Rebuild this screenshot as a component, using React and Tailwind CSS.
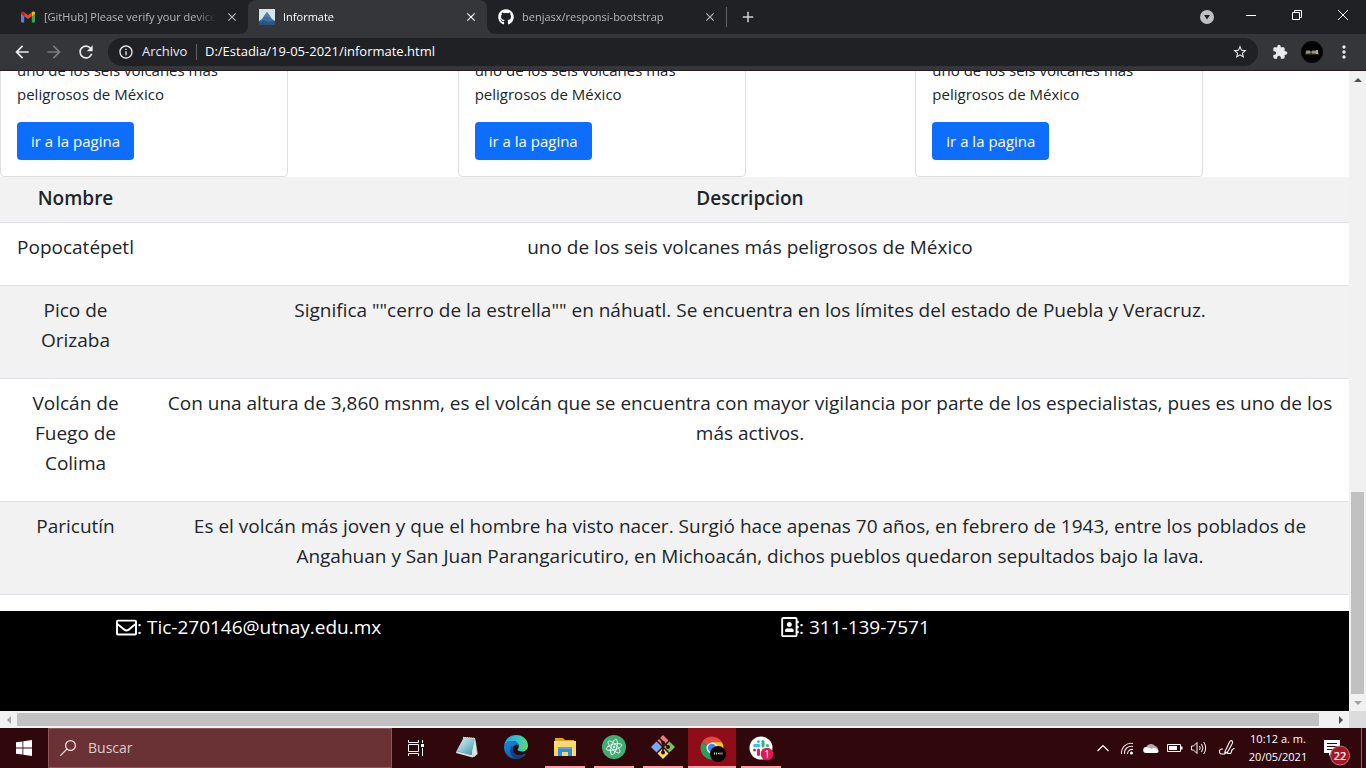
import React from "react";
import { MdArrowBack, MdArrowForward, MdRefresh, MdInfoOutline, MdStarBorder, MdExtension, MdMoreVert, MdClose, MdAdd } from "react-icons/md";
import { FaGithub, FaRegEnvelope, FaRegAddressBook } from "react-icons/fa";

const rows = [
  ["Popocatépetl", "uno de los seis volcanes más peligrosos de México"],
  ["Pico de Orizaba", 'Significa ""cerro de la estrella"" en náhuatl. Se encuentra en los límites del estado de Puebla y Veracruz.'],
  ["Volcán de Fuego de Colima", "Con una altura de 3,860 msnm, es el volcán que se encuentra con mayor vigilancia por parte de los especialistas, pues es uno de los más activos."],
  ["Paricutín", "Es el volcán más joven y que el hombre ha visto nacer. Surgió hace apenas 70 años, en febrero de 1943, entre los poblados de Angahuan y San Juan Parangaricutiro, en Michoacán, dichos pueblos quedaron sepultados bajo la lava."],
];

function GmailIcon() {
  return (
    <svg viewBox="0 0 16 16" className="size-4">
      <path d="M1 4.2v8.2c0 .6.4 1 1 1h2.2V6.6z" fill="#4285f4" />
      <path d="M15 4.2v8.2c0 .6-.4 1-1 1h-2.2V6.6z" fill="#34a853" />
      <path d="M11.8 3.4v3.8L15 4.8V4c0-1.4-1.5-2-2.5-1.2z" fill="#fbbc04" />
      <path d="M4.2 3.4v3.8L1 4.8V4c0-1.4 1.5-2 2.5-1.2z" fill="#c5221f" />
      <path d="M4.2 7.2V3.3L8 6.2l3.8-2.9v3.9L8 10z" fill="#ea4335" />
    </svg>
  );
}

function MountainIcon() {
  return (
    <svg viewBox="0 0 16 16" className="size-4">
      <rect width="16" height="16" fill="#d6e4ec" />
      <path d="M0 16v-4l3-2 2-3 3-4 3 4 2 3 3 2v4z" fill="#3f6f9f" />
      <path d="M8 3l3 4-1 1-2-1-2 1-1-1z" fill="#5c82a3" />
      <path d="M0 16v-3l5-2 4 2 7-1v4z" fill="#285684" />
    </svg>
  );
}

function Tab({ icon, title, active }) {
  return (
    <div className="flex h-full w-[239px] items-center gap-2 pr-2 pl-[11px]">
      <button type="button" className={"flex min-w-0 flex-1 items-center gap-2 text-left text-[11px] leading-4 " + (active ? "text-white" : "text-[#b4b7bb]")}>
        <span className="shrink-0">{icon}</span>
        <span className="flex-1 overflow-hidden whitespace-nowrap [mask-image:linear-gradient(to_right,black_88%,transparent)]">{title}</span>
      </button>
      <button type="button" aria-label={"Cerrar " + title} className={"flex size-4 items-center justify-center " + (active ? "text-white" : "text-[#b4b7bb]")}>
        <MdClose className="size-[14px]" />
      </button>
    </div>
  );
}

function BrowserBar() {
  return (
    <header className="shrink-0 border-b border-[#241c20] bg-[#35363a]">
      <div className="flex h-[34px]">
        <div className="rounded-br-lg bg-[#202124] pl-[9px]">
          <Tab icon={<GmailIcon />} title="[GitHub] Please verify your device" />
        </div>
        <div className="bg-[linear-gradient(#202124_50%,#35363a_50%)]">
          <div className="h-full rounded-t-lg bg-[#35363a]">
            <Tab icon={<MountainIcon />} title="Informate" active />
          </div>
        </div>
        <div className="flex flex-1 items-center rounded-bl-lg bg-[#202124]">
          <Tab icon={<FaGithub className="size-4 text-white" />} title="benjasx/responsi-bootstrap" />
          <span className="h-5 w-px bg-[#5f6165]" />
          <button type="button" aria-label="Nueva pestaña" className="flex h-8 w-[42px] items-center justify-center text-[#cfd1d4]">
            <MdAdd className="size-[18px]" />
          </button>
          <div className="ml-auto flex h-full text-white">
            <button type="button" aria-label="Buscar pestañas" className="flex w-[42px] items-center justify-center">
              <svg viewBox="0 0 14 14" className="size-[14px]">
                <circle cx="7" cy="7" r="7" fill="#bdc1c6" />
                <path d="M4 5h6L7 9.5z" fill="#202124" />
              </svg>
            </button>
            <button type="button" aria-label="Minimizar" className="flex h-[29px] w-[46px] items-center justify-center">
              <svg viewBox="0 0 10 10" className="size-[10px]"><path d="M0 5h10v1H0z" fill="currentColor" /></svg>
            </button>
            <button type="button" aria-label="Restaurar" className="flex h-[29px] w-[46px] items-center justify-center">
              <svg viewBox="0 0 10 10" className="size-[10px]" fill="none" stroke="currentColor"><path d="M.5 2.5h7v7h-7zM2.5 2.5v-2h7v7h-2" /></svg>
            </button>
            <button type="button" aria-label="Cerrar" className="flex h-[29px] w-[46px] items-center justify-center">
              <svg viewBox="0 0 10 10" className="size-[10px]" fill="none" stroke="currentColor"><path d="M0 0l10 10M10 0L0 10" /></svg>
            </button>
          </div>
        </div>
      </div>
      <div className="flex h-9 items-center px-[6px] text-[#e8eaed]">
        <button type="button" aria-label="Atrás" className="flex w-8 justify-center"><MdArrowBack className="size-5" /></button>
        <button type="button" aria-label="Adelante" className="flex w-8 justify-center text-[#7b7c7f]"><MdArrowForward className="size-5" /></button>
        <button type="button" aria-label="Recargar" className="flex w-8 justify-center"><MdRefresh className="size-5" /></button>
        <div className="mx-[6px] flex h-7 flex-1 items-center rounded-full bg-[#202124] pr-[10px] pl-[10px] text-[13px]">
          <MdInfoOutline className="size-4" />
          <label htmlFor="url" className="ml-2 w-[46px] whitespace-nowrap">Archivo</label>
          <span className="mx-2 h-4 w-px bg-[#5f6165]" />
          <input id="url" type="text" defaultValue="D:/Estadia/19-05-2021/informate.html" className="min-w-0 flex-1 bg-transparent text-white outline-none" />
          <button type="button" aria-label="Agregar a favoritos"><MdStarBorder className="size-4" /></button>
        </div>
        <button type="button" aria-label="Extensiones" className="flex w-8 justify-center"><MdExtension className="size-4" /></button>
        <button type="button" aria-label="Perfil" className="flex w-8 justify-center">
          <svg viewBox="0 0 22 22" className="size-[22px]">
            <circle cx="11" cy="11" r="11" fill="#050404" />
            <path d="M4 12.500h14" stroke="#4c3b22" strokeWidth="2" />
            <path d="M6 9.500v3M8 9.500v3M9.500 11h1M12 9.500v3M14 9.500v3M15 10h2M15 12h2" stroke="#d8d4cc" strokeWidth="1.300" />
          </svg>
        </button>
        <button type="button" aria-label="Menú" className="flex w-8 justify-center"><MdMoreVert className="size-5" /></button>
      </div>
    </header>
  );
}

function Card() {
  return (
    <article className="w-72 rounded border border-[#dfdfdf] bg-white p-4">
      <p className="mb-4 text-[15px] leading-6">uno de los seis volcanes más peligrosos de México</p>
      <a href="#pagina" className="inline-block rounded bg-[#0d6efd] px-[14px] py-[7px] align-top text-[15px] leading-6 text-white">ir a la pagina</a>
    </article>
  );
}

function Page() {
  return (
    <main className="flex min-w-0 flex-1 flex-col justify-end overflow-hidden bg-white text-[#212529]">
      <div className="-mr-6 grid shrink-0 grid-cols-3">
        <Card />
        <Card />
        <Card />
      </div>
      <table className="mb-4 w-full shrink-0 border-separate border-spacing-0 text-center text-[19px] leading-[30px]">
        <thead>
          <tr className="bg-[#f2f2f2]">
            <th className="w-[151px] border-b border-[#dee2e6] px-2 pt-[6px] pb-[9px] font-semibold">Nombre</th>
            <th className="border-b border-[#dee2e6] px-2 pt-[6px] pb-[9px] font-semibold">Descripcion</th>
          </tr>
        </thead>
        <tbody>
          {rows.map(([name, text]) => (
            <tr key={name} className="align-top even:bg-[#f2f2f2]">
              <td className="border-b border-[#dee2e6] px-2 pt-[9px] pb-[23px]">{name}</td>
              <td className="border-b border-[#dee2e6] px-2 pt-[9px] pb-[23px]">{text}</td>
            </tr>
          ))}
        </tbody>
      </table>
      <footer className="grid h-[100px] shrink-0 grid-cols-[665fr_568fr] bg-black pl-[116px] text-[19px] leading-8 text-white">
        <p className="flex h-8 items-center"><FaRegEnvelope className="size-[21px]" />: Tic-270146@utnay.edu.mx</p>
        <p className="flex h-8 items-center"><FaRegAddressBook className="h-5 w-[18px]" />: 311-139-7571</p>
      </footer>
    </main>
  );
}

function Arrow({ d, label, dim }) {
  return (
    <button type="button" aria-label={label} className={"flex size-[17px] shrink-0 items-center justify-center " + (dim ? "text-[#a3a3a3]" : "text-[#505050]")}>
      <svg viewBox="0 0 8 8" className="size-2"><path d={d} fill="currentColor" /></svg>
    </button>
  );
}

function VerticalScroll() {
  return (
    <div className="flex w-[17px] shrink-0 flex-col items-center bg-[#f1f1f1]">
      <Arrow label="Subir" d="M0 6l4-4 4 4z" />
      <div className="flex flex-1 flex-col justify-end"><div className="h-1/3 w-[13px] bg-[#c1c1c1]" /></div>
      <Arrow label="Bajar" d="M0 2l4 4 4-4z" dim />
    </div>
  );
}

function HorizontalScroll() {
  return (
    <div className="flex h-[17px] shrink-0 items-center bg-[#f1f1f1]">
      <Arrow label="Izquierda" d="M6 0L2 4l4 4z" dim />
      <div className="flex-1"><div className="h-[13px] w-[99%] bg-[#c1c1c1]" /></div>
      <Arrow label="Derecha" d="M2 0l4 4-4 4z" />
      <span className="size-[17px] bg-[#dcdcdc]" />
    </div>
  );
}

const NotepadIcon = (
  <svg viewBox="0 0 24 24" className="size-6">
    <defs><linearGradient id="pad" x1="0" y1="0" x2="1" y2="1"><stop offset="0" stopColor="#e2f3f6" /><stop offset=".5" stopColor="#8cc8d6" /><stop offset="1" stopColor="#3591a8" /></linearGradient></defs>
    <path d="M20.500 4L23 19l-4 3-1-2z" fill="#9c8560" />
    <path d="M8 2l12 1 2 16-3 3z" fill="#dfeaec" />
    <path d="M8.500 3L1.500 16l15 4L20 4z" fill="url(#pad)" />
    <path d="M1.500 16l-.5 2 16.500 4.500 2-1.500L20 4l-3.500 16z" fill="#d6e0e2" />
    <path d="M8 2.500l12 1" stroke="#b9c4c6" strokeWidth="1.500" strokeDasharray="1 1" />
  </svg>
);
const EdgeIcon = (
  <svg viewBox="0 0 24 24" className="size-6">
    <defs>
      <linearGradient id="edgeTop" x1="0" y1=".4" x2="1" y2=".4"><stop offset="0" stopColor="#2a9fe2" /><stop offset=".55" stopColor="#2fc3d3" /><stop offset="1" stopColor="#62dd5b" /></linearGradient>
      <linearGradient id="edgeLow" x1="0" y1="0" x2="1" y2="1"><stop offset="0" stopColor="#168ce0" /><stop offset="1" stopColor="#114a8b" /></linearGradient>
    </defs>
    <path d="M0 11C1 4 6 0 12 0c7 0 12 5 12 10.500 0 4-3 6-6 6-3 0-4.500-1.200-4.500-2 0-.7 1.300-1.300 1.300-3.300C14.800 8 11.500 6 8.500 6 4 6 1 8.500 0 11z" fill="url(#edgeTop)" />
    <path d="M0 12C.5 8 4 6 8.500 6c3.500 0 6.300 2.300 6.300 5-1-1-2.600-1.700-4.300-.6C8.600 11.600 8 14 9.500 17c1.600 3 5.500 4.500 9.500 2.600 1-.4 3-1.300 3-.5C20 22 16 24 12 24 5 24-.3 18 0 12z" fill="url(#edgeLow)" />
    <path d="M8 11c-3 3-2.500 10 4 13 4 0 8-2 10-5-5 3-10 2-12.500-2C8.300 15 8 13 8.700 11.700z" fill="#0d3f82" />
  </svg>
);
const FolderIcon = (
  <svg viewBox="0 0 24 24" className="size-6">
    <path d="M2 3h8l2 2h9v4H2z" fill="#e0a11c" />
    <path d="M1 6h22v15H1z" fill="#ffd766" />
    <path d="M1 6h22v2H1z" fill="#ffe08a" />
    <path d="M5 12h14v9h-4v-4H9v4H5z" fill="#368bd6" />
    <path d="M5 12h14v2H5z" fill="#55a5e6" />
  </svg>
);
const AtomIcon = (
  <svg viewBox="0 0 24 24" className="size-6" fill="none">
    <circle cx="12" cy="12" r="12" fill="#42ad72" />
    <g stroke="#f2fff8" strokeWidth=".9">
      <ellipse cx="12" cy="12" rx="8" ry="2.800" transform="rotate(-15 12 12)" />
      <ellipse cx="12" cy="12" rx="8" ry="2.800" transform="rotate(45 12 12)" />
      <ellipse cx="12" cy="12" rx="8" ry="2.800" transform="rotate(105 12 12)" />
    </g>
    <circle cx="12" cy="12" r="1.200" fill="#fff" />
  </svg>
);
const GitIcon = (
  <svg viewBox="0 0 24 24" className="size-6">
    <path d="M12 0l5.500 5.500L12 11 6.500 5.500z" fill="#ee7b77" />
    <path d="M5.500 6.500L11 12l-5.500 5.500L0 12z" fill="#79a8f7" />
    <path d="M18.500 6.500L24 12l-5.500 5.500L13 12z" fill="#7cc264" />
    <path d="M12 13l5.500 5.500L12 24l-5.500-5.500z" fill="#f7dd70" />
    <path d="M8 3l4 4v10M12 7l5 5" stroke="#2b1010" strokeWidth="1.700" fill="none" />
    <g fill="#2b1010"><circle cx="12" cy="7.500" r="1.800" /><circle cx="12" cy="17.500" r="2" /><circle cx="17" cy="12" r="2" /></g>
  </svg>
);
const ChromeIcon = (
  <svg viewBox="-1 -2 26 26" className="size-[26px] overflow-visible">
    <path d="M12 12L2.050 6.250A11.500 11.500 0 0 1 21.950 6.250z" fill="#e04a3f" />
    <path d="M12 12V6.250h9.950A11.500 11.500 0 0 1 12 23.500z" fill="#f9c52c" />
    <path d="M12 12l5 3-5 8.500A11.500 11.500 0 0 1 2.050 6.250z" fill="#2d9d55" />
    <circle cx="12" cy="12" r="5.500" fill="#fff" /><circle cx="12" cy="12" r="4.200" fill="#4285f4" />
    <circle cx="18" cy="18" r="8" fill="#080606" />
    <path d="M14.500 16.500v2M16.500 16.500v2M18 17.500h1M20 16.500v2M22 16.500v2" stroke="#d6d2ca" />
  </svg>
);
const SlackIcon = (
  <svg viewBox="-1 -2 26 26" className="size-[26px] overflow-visible">
    <circle cx="12" cy="12" r="11.500" fill="#fff" />
    <g strokeWidth="3" strokeLinecap="round">
      <path d="M9.500 5.500v0M5.500 9.500h4.500" stroke="#36c5f0" />
      <path d="M14 5.500v4.500M18.500 9.500v0" stroke="#2eb67d" />
      <path d="M9.500 14v4.500M5.500 14v0" stroke="#e01e5a" />
      <path d="M14 14h4.500M14 18.500v0" stroke="#ecb22e" />
    </g>
    <circle cx="18" cy="18" r="6.300" fill="#d91c54" />
    <text x="18" y="21.500" fontSize="10" fontFamily="Open Sans, sans-serif" textAnchor="middle" fill="#fff">1</text>
  </svg>
);

const apps = [
  { name: "Bloc de notas", icon: NotepadIcon },
  { name: "Edge", icon: EdgeIcon },
  { name: "Explorador de archivos", icon: FolderIcon, open: true },
  { name: "Atom", icon: AtomIcon, open: true },
  { name: "Git", icon: GitIcon, open: true },
  { name: "Chrome", icon: ChromeIcon, open: true, active: true },
  { name: "Slack", icon: SlackIcon, open: true },
];

function Tray({ label, children }) {
  return <button type="button" aria-label={label} className="flex w-6 items-center justify-center">{children}</button>;
}

function Taskbar() {
  return (
    <nav aria-label="Barra de tareas" className="flex h-10 shrink-0 bg-[#30080c] text-white">
      <button type="button" aria-label="Inicio" className="flex w-12 items-center justify-center">
        <svg viewBox="0 0 16 16" className="size-4" fill="currentColor"><path d="M0 2.300L6.500 1.400v6.200H0zM7.300 1.300L16 0v7.600H7.300zM0 8.400h6.500v6.200L0 13.700zM7.300 8.400H16V16l-8.700-1.300z" /></svg>
      </button>
      <div className="flex w-[344px] items-center gap-3 border border-[#8a5659] bg-[#6b3236] pl-[11px]">
        <svg viewBox="0 0 16 16" className="size-4" fill="none" stroke="#f1e4e4" strokeWidth="1.200"><circle cx="10.500" cy="5.500" r="4.900" /><path d="M7 9L0 16" /></svg>
        <input type="text" aria-label="Buscar" placeholder="Buscar" className="min-w-0 flex-1 bg-transparent text-sm text-white outline-none placeholder:text-[#dccccd]" />
      </div>
      <button type="button" aria-label="Vista de tareas" className="mr-[3px] flex w-12 items-center justify-center">
        <svg viewBox="0 0 16 16" className="size-4" fill="none" stroke="currentColor"><path d="M.5 0v2.500h10V0M.5 4.500h10v7H.5zM.5 16v-2.500h10V16M14.500 0v3M14.500 8v8" /><path d="M13 4h3v3h-3z" fill="currentColor" stroke="none" /></svg>
      </button>
      <div className="flex gap-px">
        {apps.map((app) => (
          <button key={app.name} type="button" aria-label={app.name} className={"flex w-12 flex-col items-center " + (app.active ? "bg-[#8f0d18]" : "")}>
            <span className="flex flex-1 items-center">{app.icon}</span>
            <span className={"h-[2px] " + (app.active ? "w-full bg-[#f99fa8]" : app.open ? "w-10 bg-[#f99fa8]" : "w-10")} />
          </button>
        ))}
      </div>
      <div className="ml-auto flex">
        <Tray label="Mostrar iconos ocultos"><svg viewBox="0 0 12 12" className="size-3" fill="none" stroke="currentColor" strokeWidth="1.200"><path d="M.5 9L6 3.500 11.500 9" /></svg></Tray>
        <Tray label="Red"><svg viewBox="0 0 14 14" className="size-[14px]" fill="none" stroke="#e8dddd" strokeWidth="1.100"><path d="M1.500 13C1 6 7 1 13 2.500M4.500 13C4 8 8 4.500 13 5.500M7.500 13C7.500 10 10 8 13 8.500" /><circle cx="11.500" cy="12" r="1.500" fill="#fff" stroke="none" /></svg></Tray>
        <Tray label="OneDrive"><svg viewBox="0 0 16 12" className="h-3 w-4"><path d="M3 7a5 5 0 0 1 9-3 4 4 0 0 1 3 4H3z" fill="#bca9aa" /><path d="M3 11a3 3 0 0 1 .5-6c2 0 3 1 5 2a4 4 0 0 1 5 0c3 1 2.500 4 0 4z" fill="#fff" /></svg></Tray>
        <Tray label="Batería"><svg viewBox="0 0 16 10" className="h-[10px] w-4"><path d="M.5 1.500h13v7H.5z" fill="none" stroke="#fff" /><path d="M2 3h8v4H2zM14 3.500h1.500v3H14z" fill="#fff" /></svg></Tray>
        <Tray label="Volumen"><svg viewBox="0 0 16 14" className="h-[14px] w-4" fill="none" stroke="currentColor"><path d="M.5 5h2L6 1.500v11L2.500 9h-2zM8.500 5q1.500 2 0 4M10.500 3q3 4 0 8M12.700 1q4 6 0 12" /></svg></Tray>
        <button type="button" aria-label="Windows Ink" className="flex w-8 items-center justify-center"><svg viewBox="0 0 16 16" className="size-4" fill="none" stroke="currentColor" strokeWidth="1.100"><path d="M6 12L5.500 14.500M6 11.500L10.500 2q1.300-2 2.500-1T13 4l-5 9zM4 9Q.5 8.500 .5 11.500t3.500 2.500 3-1.500M8.500 13q4 1.500 4-1.500 0-2.500 3-3" /></svg></button>
        <button type="button" className="flex w-[70px] flex-col justify-center text-center text-[11px] leading-[18px] whitespace-nowrap"><span>10:12 a. m.</span><span>20/05/2021</span></button>
        <button type="button" aria-label="Notificaciones" className="flex w-12 items-center justify-center">
          <svg viewBox="0 -4 26 26" className="size-[26px] overflow-visible">
            <path d="M0 1h16v13H8l-3 3v-3H0z" fill="#fff" />
            <path d="M3 4.500h10M3 7.500h10M3 10.500h7" stroke="#30080c" />
            <circle cx="16" cy="16.500" r="9.500" fill="#a81625" stroke="#c3757c" />
            <text x="16" y="20.500" fontSize="11" fontWeight="600" fontFamily="Open Sans, sans-serif" textAnchor="middle" fill="#fff">22</text>
          </svg>
        </button>
        <button type="button" aria-label="Mostrar escritorio" className="w-[5px] border-l border-[#83676a]" />
      </div>
    </nav>
  );
}

export default function App() {
  return (
    <div className="flex h-screen flex-col overflow-hidden font-['Open_Sans','Noto_Sans',sans-serif]">
      <BrowserBar />
      <div className="flex min-h-0 flex-1">
        <Page />
        <VerticalScroll />
      </div>
      <HorizontalScroll />
      <Taskbar />
    </div>
  );
}
